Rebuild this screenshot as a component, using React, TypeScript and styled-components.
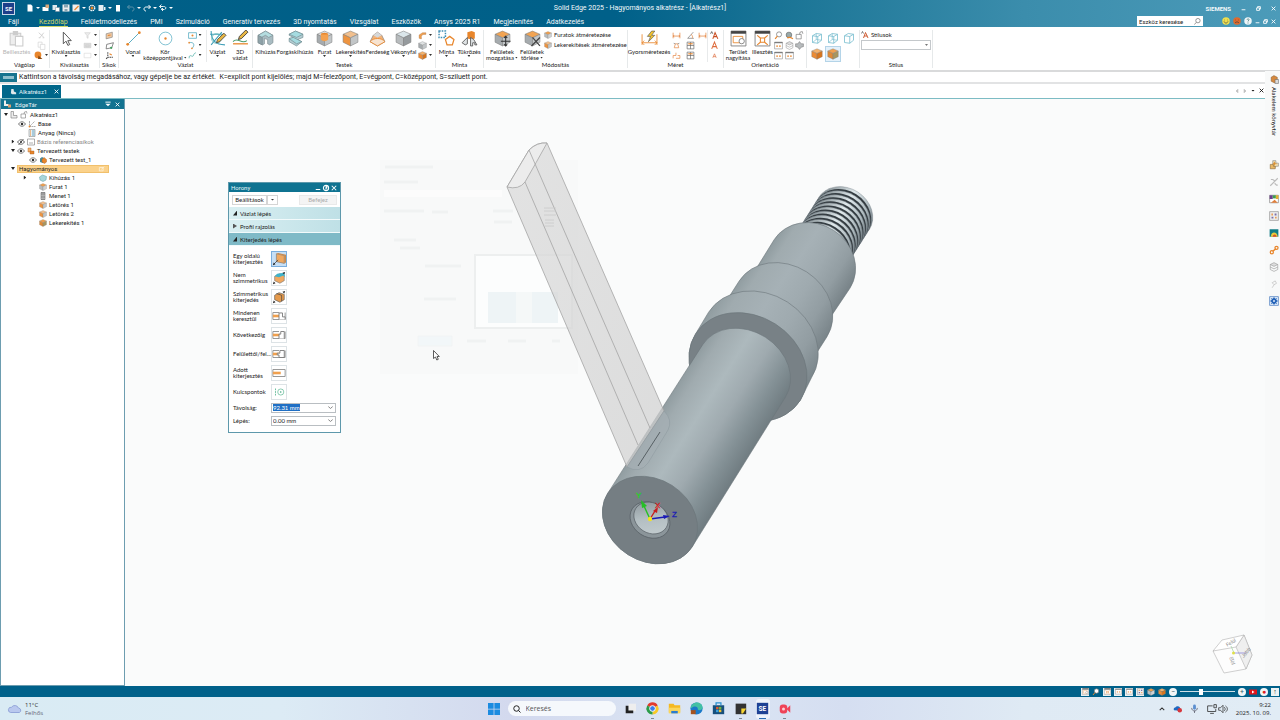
import React from "react";
import styled, { createGlobalStyle } from "styled-components";

const orange = "#e8862c";
const ui = `Roboto, "Liberation Sans", Arial, sans-serif`;
const narrow = `Lato, "Liberation Sans", sans-serif`;
const humanist = `"Open Sans", "Noto Sans", sans-serif`;

const Global = createGlobalStyle`
  *, *::before, *::after { box-sizing: border-box; }
  body { margin: 0; background: #fafbfb; font-family: ${ui}; font-size: 7px; line-height: 9px; color: #222; }
  button, input, select { font: inherit; color: inherit; margin: 0; }
  button { background: none; border: 0; padding: 0; cursor: default; }
  ul { list-style: none; margin: 0; padding: 0; }
`;

/* ---------- icons ---------- */

const Svg = styled.svg<{ $s: number }>`
  width: ${(p) => p.$s}px;
  height: ${(p) => p.$s}px;
  flex: none;
  display: block;
  fill: none;
  overflow: visible;
`;

const Cube = ({ t = "#dfe2e3", l = "#a6abae", r = "#c2c6c8" }: { t?: string; l?: string; r?: string }) => (
  <g stroke="#7d7d7d" strokeWidth=".5" strokeLinejoin="round">
    <path d="M8 1l7 3-7 3.4L1 4z" fill={t} />
    <path d="M1 4l7 3.4V15l-7-3.5z" fill={l} />
    <path d="M15 4L8 7.4V15l7-3.5z" fill={r} />
  </g>
);

const Wire = ({ hidden }: { hidden?: boolean }) => (
  <g stroke="#6db8cb" strokeWidth="1" strokeLinejoin="round">
    <path d="M2 5l5-3 7 1v8l-5 4-7-1z M2 5l7 1v9M9 6l5-3" />
    {hidden && <path d="M7 2v8l7 1M7 10l-5 4" strokeWidth=".8" />}
  </g>
);

const Through = ({ d }: { d: string }) => (
  <>
    <path d="M15 4v8H1V4h7" stroke="#8a8a8a" strokeWidth="1" />
    <path d="M1 8h8" stroke="#f0a04e" strokeWidth="3" />
    <path d={d} stroke="#777" strokeWidth="1" fill="#fff" />
  </>
);

const glyphs: Record<string, React.ReactNode> = {
  paste: <g stroke="#ccc"><path d="M2 3h10v11H2z" fill="#eee" /><path d="M5 1.500h4v3H5z" fill="#ccc" /><path d="M7 6h7v9H7z" fill="#fff" /></g>,
  cut: <path d="M3 3l9 8M12 3l-7 9M3 12h3M10 12h3" stroke="#ccc" strokeWidth="1.5" />,
  copy: <g stroke="#ccc" fill="#fff"><path d="M2 2h7v9H2z" /><path d="M6 6h8v9H6z" /></g>,
  brush: <><circle cx="7" cy="7" r="6" fill={orange} /><path d="M8 8l7 6H7z" fill="#8a4a12" /></>,
  pointer: <path d="M5 2v11l2.500-2.500 1.800 4 1.700-.8-1.800-3.700h3.300z" fill="#fff" stroke="#555" strokeWidth=".9" />,
  filter: <path d="M3 3h10l-4 5v5l-2-1V8z" stroke="#ccc" fill="#eee" />,
  chip: <path d="M2 4h12v8H2z M5 7h6v3H5z" stroke="#ccc" fill="#ddd" />,
  frame: <path d="M2 4h12v8H2z" stroke="#d5d5d5" />,
  plane: <><path d="M2 5l11-3v9L2 14z" fill="#ecc9a6" stroke="#777" /><path d="M5 8l5-1" stroke={orange} strokeWidth="2" /></>,
  plane2: <><path d="M3 6l12-3-3 9-10 2z" stroke="#555" strokeWidth="1.200" /><circle cx="11" cy="12" r="2" fill="#3e9d5b" /></>,
  coords: <><path d="M5 2v9h9M2 14l3-3" stroke="#444" strokeWidth="1.800" strokeDasharray="3 1" /><path d="M8 5l4 2" stroke={orange} strokeWidth="2" /></>,
  line: <><path d="M3 13L13 3" stroke="#3f9fb8" strokeWidth=".8" /><circle cx="2.500" cy="13.500" r="1.300" fill={orange} /><circle cx="13.500" cy="2.500" r="1.300" fill={orange} /></>,
  circle: <><circle cx="8" cy="8" r="6" stroke="#6db8cb" strokeWidth=".8" /><circle cx="8" cy="8" r="1.100" fill={orange} /></>,
  rect: <><path d="M1 3h14v10H1z" stroke="#3f9fb8" strokeWidth="1.200" /><circle cx="8" cy="8" r="1.800" fill={orange} /></>,
  arc: <><path d="M2 3c9-2 11 5 5 10" stroke="#3f9fb8" strokeWidth="1.200" /><circle cx="2" cy="3" r="1.500" fill={orange} /><circle cx="7" cy="13" r="1.500" fill={orange} /></>,
  spline: <path d="M2 13c0-9 5-2 7-4s0-4 5-6" stroke="#3fa9a0" strokeWidth="1.200" />,
  sketch: <><path d="M2 1c0 9 4 13 13 13M1 4h13M2 14L12 2" stroke="#3f9fb8" strokeWidth="1" /><circle cx="7" cy="8" r="4.500" stroke="#66b8b8" strokeWidth=".8" /><path d="M7 12l1-3 6-6 2 2-6 6z" fill="#e9b744" stroke="#444" strokeWidth=".8" /></>,
  sketch3: <><path d="M1 11c4-5 8 3 13-1" stroke="#4b9c6c" /><path d="M1 13h14" stroke={orange} strokeWidth="1.200" /><path d="M6 9l1-3 6-6 2 2-6 6z" fill="#e9b744" stroke="#333" strokeWidth=".8" /></>,
  extrude: <g stroke="#7b8a8f" strokeWidth=".6"><path d="M1 5l7-4 7 4v7l-3 2-2-1V9L7 8v5l-2 1-4-2z" fill="#a9bcc2" /><path d="M1 5l7-4 7 4-4 2-3-2-4 2z" fill="#b5dde0" /><path d="M1 5l4 2v7l-4-2z" fill="#8fa3a9" /></g>,
  revolve: <g stroke="#6f8a90" strokeWidth=".6"><path d="M2 4l6-3 7 3v3l-5 2 4 2-5 4-7-4V8l4-1-4-2z" fill="#b3ccd2" /><path d="M2 4l6-3 7 3-6 3zM2 8l4-1 8 4-5 2z" fill="#a5dbe0" /></g>,
  hole: <><Cube /><ellipse cx="8" cy="4.300" rx="3.500" ry="1.800" fill={orange} /><path d="M4.500 4.300h7V9c-2 2-5 2-7 0z" fill="#f4a14e" /></>,
  round: <Cube l="#ee9440" t="#f1c08f" />,
  draft: <><path d="M4 5l4-3 4 3 3 6-7 4-7-4z" fill="#f2b37a" stroke="#7d7d7d" strokeWidth=".6" /><path d="M4 5l4-3 4 3-4 2z" fill="#d5d8da" /><path d="M1 11c3-4 11-4 14 0l-7 4z" fill="#f7e3d0" stroke={orange} strokeWidth=".8" /></>,
  shell: <Cube t="#dbe6ea" l="#b7bbbd" r="#959a9d" />,
  cube: <Cube />,
  cubeO: <Cube t="#f6b26b" l="#ec8b33" r="#d8751c" />,
  cubeT: <Cube t="#f0a04e" l="#b8bcbe" r="#cfd2d4" />,
  cubeHalf: <Cube t="#f0a04e" l="#e08a36" r="#a8965f" />,
  rib: <path d="M2 13V7l6-4h6v3H9l-3 3v5z" fill="#f0a04e" stroke="#a3673a" strokeWidth=".6" />,
  pattern: <><path d="M1 1h6v6H1z" stroke="#3f8fb5" strokeDasharray="1.500 1" strokeWidth="1.400" /><path d="M11 6l4 3-1.500 5h-5L7 9z" stroke={orange} strokeWidth="1.200" /></>,
  mirror: <><path d="M6 2l4-1 3 1v6l-3 1-4-1z" fill={orange} /><path d="M1 12l5-5v6l-2 1zM9 15V7l3 2 3 5h-2v-2h-2v3z" fill="#dfe3e5" stroke="#555" strokeWidth=".8" /></>,
  move: <><Cube t="#f2a453" /><path d="M11 6v9M6.500 10.500h9M9.500 7.500L11 6l1.500 1.500M9.500 13.500L11 15l1.500-1.500" stroke="#333" strokeWidth="1" /></>,
  del: <><Cube t="#f2a453" /><path d="M8 7l7 8M15 7l-8 8" stroke="#444" strokeWidth="1.200" /></>,
  smart: <><path d="M1 4v10M15 4v10M1 12h14M3 10l-2 2 2 2M13 10l2 2-2 2" stroke={orange} strokeWidth=".8" /><path d="M10 1L6 6h3l-2 5 6-6h-3l3-4z" fill="#f4c430" stroke="#555" strokeWidth=".6" /></>,
  dim: <path d="M2 3v10M14 3v10M2 9h12M4 7L2 9l2 2M12 7l2 2-2 2" stroke="#e58b4a" strokeWidth="1.400" />,
  ang: <><path d="M13 2L3 13h11" stroke="#777" strokeWidth="1.200" /><path d="M9 6c3 2 3 4 2 7" stroke="#e58b4a" strokeWidth="1.300" /></>,
  dims: <path d="M2 13V8h5V3M7 13h7V8M10 8h4" stroke="#e58b4a" strokeWidth="1.300" />,
  loop: <><path d="M4 12h8L10 5H6z" stroke="#e58b4a" strokeWidth="1.300" /><path d="M3 4l3 1M13 4l-3 1" stroke="#777" strokeWidth="1.200" /></>,
  grid: <><path d="M2 2h12v12H2zM2 8h12M8 2v12" stroke="#666" strokeWidth="1.200" /><path d="M4 5h8" stroke={orange} strokeWidth="2" /></>,
  letter: <path d="M3 14L8 2l5 12M5 10h6" stroke="#dd6b3c" strokeWidth="1.800" />,
  letterS: <path d="M5 12l3-7 3 7M6 10h4" stroke="#dd6b3c" strokeWidth="1.200" />,
  zoomArea: <><path d="M1 1h14v14H1z" fill="#fff" stroke="#777" strokeWidth=".8" /><path d="M1 1h14v2.500H1z" fill="#444" /><path d="M3 6h9v6H3z" stroke={orange} strokeWidth=".8" /><circle cx="11" cy="10.500" r="2.500" fill="#fff" stroke="#777" strokeWidth=".8" /></>,
  fit: <><path d="M1 1h14v14H1z" fill="#fff" stroke="#777" strokeWidth=".8" /><path d="M1 1h14v2.500H1z" fill="#444" /><path d="M6 7.500h4v4H6zM3 5l3 2.500M13 5l-3 2.500M3 14l3-2.500M13 14l-3-2.500" stroke={orange} /></>,
  zoom: <><circle cx="9" cy="6" r="4.500" fill="#fff" stroke="#777" strokeWidth="1.300" /><path d="M6 9l-4 5" stroke={orange} strokeWidth="2" /></>,
  win: <><path d="M1 2h14v12H1z" fill="#fff" stroke="#888" /><path d="M1 3h14" stroke="#555" strokeWidth="1.500" /><path d="M4 9h8" stroke={orange} strokeWidth="2" strokeDasharray="3 2" /></>,
  spin: <><circle cx="7" cy="7" r="5" fill="#9aa" stroke="#555" /><path d="M4 12c3-1 6-2 10 2" stroke={orange} strokeWidth="2.500" /></>,
  pan: <path d="M8 1l3 4h4v5l-4 1-3 4-3-4-4-1V5h4z" fill="#b7bbbd" stroke="#666" strokeWidth=".8" />,
  wire: <Wire hidden />,
  wire2: <Wire />,
  style: <><path d="M1 5l2-4 2 4" stroke="#333" strokeWidth="1.200" /><path d="M5 14l4-11 5 11M6.500 10h6" stroke="#c94e22" strokeWidth="1.800" /></>,
  eye: <><path d="M1 8c4-6 10-6 14 0-4 6-10 6-14 0z" stroke="#333" strokeWidth="1.200" /><circle cx="8" cy="8" r="2.500" fill="#333" /></>,
  eyeOff: <><path d="M1 8c4-6 10-6 14 0-4 6-10 6-14 0zM3 14L13 2" stroke="#333" strokeWidth="1.400" /><circle cx="8" cy="8" r="2" fill="#333" /></>,
  part: <path d="M2 1h5v8h7v5H2z" fill="#eee" stroke="#777" strokeWidth="1.200" />,
  lock: <path d="M2 6h9v8H2zM8 6l1-4 4-1 1 4" fill="#fff" stroke="#777" strokeWidth="1.200" />,
  axes: <><path d="M3 2v11h12M3 13L13 3" stroke="#777" strokeWidth="1.200" strokeDasharray="4 1" /><circle cx="3" cy="13" r="1.800" fill={orange} /></>,
  material: <><path d="M2 1h12v14H2z" fill="#e8f0f2" stroke="#777" /><path d="M4 4h2M4 8h2M4 12h2" stroke={orange} strokeWidth="2" /><path d="M8 4h5M8 8h5M8 12h5" stroke="#3f8fb5" strokeWidth="1.500" /></>,
  refs: <path d="M1 2h14v12H1zM4 10h8" fill="#fff" stroke="#777" strokeWidth="1.200" />,
  bodies: <><path d="M2 2h6v8H2z" fill="#f6b26b" stroke="#a3571a" strokeWidth=".8" /><path d="M6 8h8v6H6z" fill={orange} stroke="#a3571a" strokeWidth=".8" /></>,
  body: <><path d="M2 5l4-3 4 2v9l-3 1-5-2z" fill="#4c8a99" /><path d="M6 7l4-4 5 4v5l-4 3-5-3z" fill={orange} stroke="#a3571a" strokeWidth=".8" /></>,
  ext: <path d="M1 6l6-4 8 3-1 7-6 3-6-3z" fill="#a8d6da" stroke="#5f9aa1" />,
  thread: <><path d="M4 1h8v14H4z" fill="#888" stroke="#555" /><path d="M4 4h8M4 7h8M4 10h8M4 13h8" stroke="#ddd" /></>,
  sideOne: <><path d="M5 2l9 2v9l-9-2z" fill="#f0a860" stroke="#777" strokeWidth=".7" /><path d="M5 2l2-1 9 2-2 1zM14 4l2-1v9l-2 1z" fill="#c98a4d" /><path d="M2 14l5-5" stroke="#333" strokeWidth=".8" /><path d="M1 15l1-3 2 2z" fill="#222" /></>,
  sideTwo: <><path d="M3 6l6-3 5 2v6l-5 3-6-3z" fill="#f0a860" stroke="#777" strokeWidth=".7" /><path d="M3 6l3-3 8-1 1 5-2-2-5 2z" fill="#3fb2c9" /><path d="M1 15l1-3 2 2zM15 1l-1 3-2-2z" fill="#222" /></>,
  sideSym: <><path d="M3 6l5-3 6 2v6l-5 3-6-3z" fill="#e59a4c" stroke="#555" strokeWidth=".7" /><path d="M5 4l6 2v7" stroke="#444" strokeWidth=".8" /><path d="M1 15l1-3 2 2zM15 1l-1 3-2-2z" fill="#222" /></>,
  thru1: <Through d="M8 12V4.500h4V9h3v3" />,
  thru2: <Through d="M8 12V7h2V4h4v8" />,
  thru3: <Through d="M8 12V9H6V7h3V4h5v8z" />,
  thru4: <><path d="M1 4h14v8H1z" stroke="#8a8a8a" fill="#fff" /><path d="M1 8h9" stroke="#f0a04e" strokeWidth="3" /></>,
  keypt: <><circle cx="10" cy="8" r="3.500" stroke="#5bb894" strokeWidth=".8" /><circle cx="10" cy="8" r=".9" fill="#3ba27c" /><path d="M4 4v8" stroke="#5bb894" strokeDasharray="2 1" /></>,
  doc: <path d="M3 1h7l3 3v11H3z" fill="#fff" />,
  docPart: <path d="M3 2h5l1 6 5 2v4H5l-3-2z" fill="#dfe8eb" />,
  open: <><path d="M1 6h12v8H1z" fill="#fff" /><path d="M7 1h7v7H7z" fill="#dba77a" /></>,
  sheet: <><path d="M1 2h9v10H1z" fill="#dfe9ee" /><path d="M7 7h8v8H7z" fill="#fff" stroke="#789" /></>,
  save: <><path d="M1 1h14v14H1z" fill="#eee" /><path d="M4 2h8v5H4zM5 10h6v5H5z" fill="#8aa6b3" /></>,
  saveAs: <><path d="M1 1h14v14H1z" fill="#eee" /><path d="M5 12L13 4" stroke={orange} strokeWidth="2.500" /></>,
  gear: <><circle cx="8" cy="8" r="5.500" stroke="#fff" strokeWidth="2.500" strokeDasharray="3 1.300" /><circle cx="8" cy="8" r="3" fill={orange} /></>,
  print: <path d="M1 2h10v12H1zM12 6h3v6h-3z" fill="#fff" opacity=".9" />,
  phone: <path d="M4 2h8v13H4z" fill="#fff" />,
  undo: <path d="M5 2L1 6l4 4M1 6h8c7 0 6 8 1 8" stroke="#5f93a9" strokeWidth="2" />,
  redo: <path d="M11 2l4 4-4 4M15 6H7c-7 0-6 8-1 8" stroke="#fff" strokeWidth="2" />,
  orbit: <path d="M5 1L1 5l4 4M1 5h8c6 0 6 5 2 6M8 8l-3 3 3 3M5 11h5" stroke="#fff" strokeWidth="1.800" />,
  link: <><circle cx="4.500" cy="11.500" r="2.500" stroke={orange} strokeWidth="2" /><circle cx="12" cy="4.500" r="2.500" stroke={orange} strokeWidth="2" /><path d="M6 10l5-4" stroke={orange} strokeWidth="2.500" /></>,
  percent: <path d="M2 14L14 2M3 4h3l3 2M9 10l3 3h2" stroke="#bbb" strokeWidth="1.800" />,
  palette: <><path d="M1 2h14v12H1z" fill="#fff" stroke="#777" /><path d="M1 2h5v6H1z" fill="#6b3f8e" /><path d="M6 2h5v5H6z" fill="#3c9c52" /><path d="M11 2h4v6h-4z" fill="#e0b030" /><path d="M3 14l6-5 5 5z" fill="#e17f3a" /></>,
  swatches: <><path d="M1 1h14v14H1z" fill="#eee" stroke="#888" /><path d="M4 4h2v3H4zM10 9h2v3h-2z" fill={orange} /><path d="M9 4h3v3H9zM4 9h3v3H4z" fill="#7c6fa8" /></>,
  rainbow: <><path d="M1 2h14v12H1z" fill="#127c86" /><path d="M3 14c0-9 10-9 11 0z" fill="#e9c93c" /><path d="M6 14c0-5 6-5 6 0z" fill="#d9532c" /></>,
  layers: <g stroke="#999" strokeWidth="1"><path d="M8 1l6 3-6 3-6-3z" fill="#ddd" /><path d="M2 8l6 3 6-3M2 12l6 3 6-3M2 4v8M14 4v8" /></g>,
  pin: <path d="M5 14l4-6M5 6l5-3 2 4-4 2z" stroke="#ccc" strokeWidth="1.500" />,
  blue: <><path d="M1 1h14v14H1z" fill="#e7f0fb" stroke="#2f67b5" /><path d="M8 1.500l2 3 3-1.500-1.500 3 3 2-3 2 1.500 3-3-1.500-2 3-2-3L3 13l1.500-3-3-2 3-2L3 3l3 1.500z" fill="#2463b8" /><circle cx="8" cy="8" r="1.500" fill="#e7f0fb" /></>,
  library: <><path d="M2 4l5-3 6 3v7l-5 3-6-3z" fill="#d5893f" stroke="#7b5a35" strokeWidth=".8" /><path d="M9 8h6v7H9z" fill="#ddd" stroke="#666" /></>,
  plus: <><path d="M6 1h5v4h4v5h-4v1H6z" fill="#f3e0b0" stroke="#888" /><path d="M2 7h5v3h3v4H2z" fill="#e9b765" stroke="#8a6a3a" /><path d="M8.500 3v6M6 6h6" stroke="#d98a2a" strokeWidth="1.500" /></>,
};

const Icon = ({ n, s = 9 }: { n: string; s?: number }) => (
  <Svg $s={s} viewBox="0 0 16 16" aria-hidden="true">{glyphs[n]}</Svg>
);

/* ---------- page frame ---------- */

const Page = styled.div`
  min-height: 100vh;
  display: flex;
  flex-direction: column;
  overflow: hidden;
`;

const Header = styled.header`
  flex: none;
  background: linear-gradient(90deg, #005f87 0%, #006089 48%, #1c7697 62%, #3b8dac 80%, #4c9bb9 100%);
  color: #f2f8fa;
`;

const TitleRow = styled.div`
  height: 15px;
  display: grid;
  grid-template-columns: 1fr auto 1fr;
  align-items: center;
  padding-top: 1px;
`;

const QuickBar = styled.div`
  display: flex;
  align-items: center;
  gap: 2px;
  padding-left: 2px;
`;

const Logo = styled.div`
  width: 13px;
  height: 13px;
  margin-right: 9px;
  border: 1px solid #c8d8e8;
  background: #1d3f8a;
  font-size: 6px;
  font-weight: bold;
  line-height: 12px;
  text-align: center;
`;

const Caret = styled.span<{ $c?: string; $wide?: boolean }>`
  flex: none;
  width: ${(p) => (p.$wide ? 4 : 3)}px;
  height: 2px;
  background: ${(p) => p.$c || "#333"};
  clip-path: polygon(0 0, 100% 0, 50% 100%);
`;

const WindowButtons = styled.div<{ $gap: number }>`
  display: flex;
  justify-content: flex-end;
  align-items: center;
  gap: ${(p) => p.$gap}px;
  padding-right: 4px;
`;

const Brand = styled.strong`
  font-size: 6px;
`;

const TabRow = styled.div`
  height: 12px;
  display: flex;
  align-items: center;
`;

const Tabs = styled.nav`
  display: flex;
  gap: 13px;
  padding-left: 8px;
  flex: 1;
`;

const RibbonTab = styled.a<{ $on?: boolean; $file?: boolean }>`
  color: ${(p) => (p.$on ? "#cfd66a" : "#f2f8fa")};
  text-decoration: none;
  white-space: nowrap;
  height: 11px;
  line-height: 12px;
  margin-right: ${(p) => (p.$file ? "7px" : "0")};
  box-shadow: ${(p) => (p.$on ? "0 -1px 0 #cfd66a inset" : "none")};
`;

const SearchBox = styled.label`
  display: flex;
  align-items: center;
  width: 66px;
  height: 10px;
  margin-right: 19px;
  padding: 0 2px;
  background: #fff;
  color: #222;
  input {
    flex: 1;
    min-width: 0;
    padding: 0;
    border: 0;
    outline: 0;
    background: none;
    font-size: 6px;
  }
  input::placeholder { color: #222; opacity: 1; }
`;

/* ---------- ribbon ---------- */

const Ribbon = styled.div`
  flex: none;
  height: 43px;
  display: flex;
  padding-top: 3px;
  background: #fff;
  font-family: ${narrow};
  font-size: 6px;
  line-height: 6px;
`;

const Group = styled.section<{ $w: number }>`
  flex: none;
  width: ${(p) => p.$w}px;
  height: 38px;
  display: flex;
  flex-direction: column;
  justify-content: space-between;
  border-right: 1px solid #e6e9ea;
`;

const GroupRow = styled.div`
  display: flex;
  height: 32px;
`;

const GroupName = styled.h2`
  margin: 0;
  font: inherit;
  text-align: center;
  white-space: nowrap;
`;

const Tool = styled.button<{ $w: number; $dim?: boolean }>`
  flex: none;
  width: ${(p) => p.$w}px;
  display: flex;
  flex-direction: column;
  align-items: center;
  gap: 1px;
  white-space: nowrap;
  color: ${(p) => (p.$dim ? "#b5b5b5" : "#222")};
`;

const ToolText = styled.span`
  display: flex;
  flex-direction: column;
  align-items: center;
  gap: 1px;
  height: 14px;
  line-height: 5px;
  padding-top: 1px;
`;

const Inline = styled.span`
  display: flex;
  align-items: center;
  gap: 1px;
`;

const Stack = styled.div<{ $w: number; $line?: boolean }>`
  flex: none;
  width: ${(p) => p.$w}px;
  display: flex;
  flex-direction: column;
  align-items: center;
  border-right: ${(p) => (p.$line ? "1px solid #e8eaeb" : "0")};
`;

const Mini = styled.button`
  display: flex;
  align-items: center;
  gap: 2px;
  height: 10px;
  white-space: nowrap;
`;

const StyleGrid = styled.div`
  display: grid;
  grid-template-columns: repeat(3, 16px);
  grid-auto-rows: 16px;
  padding: 0 2px;
`;

const StyleButton = styled.button<{ $on?: boolean }>`
  display: grid;
  place-items: center;
  background: ${(p) => (p.$on ? "#e4f1fa" : "none")};
  box-shadow: ${(p) => (p.$on ? "0 0 0 1px #b4d4e8 inset" : "none")};
`;

const StyleField = styled.span`
  display: flex;
  align-items: center;
  width: 70px;
  height: 10px;
  padding-right: 2px;
  border: 1px solid #c4c8cb;
  background: #fff;
  select {
    flex: 1;
    height: 8px;
    appearance: none;
    border: 0;
    padding: 0;
    background: none;
  }
`;

const StyleList = styled.div`
  padding: 0 1px;
`;

type ToolDef = { i: string; t: string; b?: string; w: number; caret?: boolean; dim?: boolean };

const BigTool = ({ i, t, b, w, caret, dim }: ToolDef) => (
  <Tool $w={w} $dim={dim}>
    <Icon n={i} s={17} />
    <ToolText>
      <span>{t}</span>
      {b ? <Inline>{b}{caret && <Caret />}</Inline> : caret && <Caret />}
    </ToolText>
  </Tool>
);

const MiniStack = ({ w, items, caret, line }: { w: number; items: string[]; caret?: boolean; line?: boolean }) => (
  <Stack $w={w} $line={line}>
    {items.map((n, k) => (
      <Mini key={k} aria-label={n}><Icon n={n} s={9} />{caret && <Caret />}</Mini>
    ))}
  </Stack>
);

/* ---------- work area ---------- */

const Body = styled.div`
  flex: 1;
  display: flex;
  min-height: 0;
`;

const Main = styled.main`
  flex: 1;
  min-width: 0;
  display: flex;
  flex-direction: column;
`;

const Prompt = styled.div`
  height: 14px;
  display: flex;
  align-items: center;
  gap: 2px;
  border-top: 2px solid #d9dadb;
  border-bottom: 2px solid #e2e3e4;
  background: #fff;
  white-space: pre;
`;

const PromptMark = styled.span`
  width: 17px;
  height: 9px;
  padding: 3px;
  background: #17748f;
  &::before {
    content: "";
    display: block;
    height: 3px;
    background: #8fc0cd;
  }
`;

const DocBar = styled.div`
  height: 15px;
  display: flex;
  align-items: flex-end;
  justify-content: space-between;
  border-bottom: 1px solid #7dbcc4;
  background: #fff;
`;

const DocTab = styled.div`
  height: 13px;
  width: 59px;
  margin-left: 2px;
  padding: 0 2px 0 8px;
  display: flex;
  align-items: center;
  gap: 2px;
  background: #00678a;
  color: #e4f2f6;
  font-size: 6px;
  button { margin-left: auto; }
`;

const DocNav = styled.div`
  display: flex;
  align-items: center;
  gap: 4px;
  padding: 0 1px 5px 0;
`;

const Split = styled.div`
  flex: 1;
  display: flex;
  min-height: 0;
`;

const TreePanel = styled.aside`
  flex: none;
  width: 125px;
  border: 1px solid #6d9db0;
  border-top: 0;
  background: #fff;
`;

const PanelTitle = styled.div`
  height: 10px;
  display: flex;
  align-items: center;
  gap: 4px;
  padding: 0 4px 0 2px;
  background: #127391;
  color: #e4f2f6;
  font-size: 6px;
  h2 { margin: 0; flex: 1; font: inherit; }
`;

const Tree = styled.ul`
  padding-top: 1px;
  font-size: 6px;
  line-height: 9px;
`;

const TreeRow = styled.li<{ $pad: number; $dim?: boolean }>`
  height: 9px;
  display: flex;
  align-items: center;
  gap: 2px;
  padding-left: ${(p) => p.$pad}px;
  color: ${(p) => (p.$dim ? "#888" : "#222")};
  white-space: nowrap;
`;

const TreeMark = styled.span<{ $open?: boolean }>`
  flex: none;
  width: 4px;
  height: 4px;
  background: #222;
  clip-path: ${(p) => (p.$open ? "polygon(0 10%, 100% 10%, 50% 90%)" : "polygon(20% 0, 80% 50%, 20% 100%)")};
`;

const TreeBand = styled.span`
  display: flex;
  justify-content: space-between;
  align-items: center;
  width: 92px;
  height: 8px;
  padding: 0 3px 0 1px;
  background: #fbd28b;
  border: 1px solid #f1c06c;
`;

const Canvas = styled.div`
  position: relative;
  flex: 1;
  min-width: 0;
  background: #fafbfb;
`;

const Scene = styled.svg`
  position: absolute;
  inset: 0;
  width: 100%;
  height: 100%;
`;

const Rail = styled.aside`
  flex: none;
  width: 15px;
  display: flex;
  flex-direction: column;
  align-items: center;
  gap: 7px;
  padding: 4px 0 0 3px;
  border-top: 1px solid #d9dadb;
  background: #f8f9f9;
`;

const RailTab = styled.div`
  height: 78px;
  display: flex;
  flex-direction: column;
  align-items: center;
  gap: 3px;
  font-size: 6px;
  span {
    writing-mode: vertical-rl;
    white-space: nowrap;
  }
`;

/* ---------- floating command window ---------- */

const Dialog = styled.section`
  position: absolute;
  left: 103px;
  top: 83px;
  width: 113px;
  height: 251px;
  border: 1px solid #5d98ab;
  background: #fff;
  font-family: ${narrow};
  font-size: 6px;
  line-height: 7px;
`;

const DialogTitle = styled.div`
  height: 9px;
  display: flex;
  align-items: center;
  gap: 2px;
  padding: 0 3px 0 2px;
  background: #0f7391;
  color: #eaf6f8;
  font-family: ${ui};
  h2 { margin: 0; flex: 1; font: inherit; }
`;

const DialogActions = styled.div`
  height: 15px;
  display: flex;
  align-items: center;
  padding: 0 3px;
`;

const PushButton = styled.button<{ $w: number; $dim?: boolean; $end?: boolean }>`
  width: ${(p) => p.$w}px;
  height: 10px;
  display: grid;
  place-items: center;
  margin-left: ${(p) => (p.$end ? "auto" : "0")};
  border: 1px solid ${(p) => (p.$dim ? "#e9e9e9" : "#d5d5d5")};
  background: ${(p) => (p.$dim ? "#f4f4f4" : "#fff")};
  color: ${(p) => (p.$dim ? "#aaa" : "#222")};
`;

const StepHead = styled.button<{ $on?: boolean }>`
  width: 100%;
  height: 13px;
  display: flex;
  align-items: center;
  gap: 3px;
  padding: 0 4px;
  border-bottom: 1px solid #f2fafb;
  background: ${(p) => (p.$on ? "#7fbac7" : "linear-gradient(90deg, #d9eff2, #bfe0e6)")};
`;

const StepMark = styled.i<{ $open?: boolean }>`
  width: 4px;
  height: 5px;
  background: ${(p) => (p.$open ? "#222" : "#555")};
  clip-path: ${(p) => (p.$open ? "polygon(100% 0, 100% 100%, 0 100%)" : "polygon(0 0, 100% 50%, 0 100%)")};
`;

const Options = styled.div`
  padding: 3px 4px 0;
`;

const OptionRow = styled.label`
  height: 19px;
  display: grid;
  grid-template-columns: 38px 16px;
  align-items: center;
  white-space: pre-line;
  line-height: 6px;
`;

const OptionButton = styled.button<{ $on?: boolean }>`
  width: 16px;
  height: 16px;
  display: grid;
  place-items: center;
  border: 1px solid ${(p) => (p.$on ? "#7aaede" : "#dde3e6")};
  background: ${(p) => (p.$on ? "#c7dff5" : "#fff")};
`;

const FieldRow = styled.label`
  height: 13px;
  display: grid;
  grid-template-columns: 38px 65px;
  align-items: center;
`;

const Combo = styled.span<{ $sel?: boolean }>`
  height: 10px;
  display: flex;
  align-items: center;
  justify-content: space-between;
  padding: 0 2px 0 1px;
  border: 1px solid #b9bec2;
  input {
    width: 27px;
    height: 7px;
    padding: 0;
    border: 0;
    outline: 0;
    line-height: 7px;
    background: ${(p) => (p.$sel ? "#1f6fc4" : "none")};
    color: ${(p) => (p.$sel ? "#fff" : "#222")};
  }
`;

/* ---------- bottom bars ---------- */

const StatusBar = styled.div`
  flex: none;
  height: 11px;
  display: flex;
  align-items: center;
  justify-content: flex-end;
  gap: 3px;
  padding-right: 1px;
  background: #00618a;
`;

const StatusChip = styled.button`
  width: 8px;
  height: 8px;
  display: grid;
  place-items: center;
  background: #edf2f3;
`;

const StatusPlain = styled(StatusChip)`
  background: none;
`;

const ZoomSlider = styled.input`
  appearance: none;
  width: 55px;
  height: 8px;
  margin: 0;
  background: linear-gradient(#cfe0e7, #cfe0e7) center / 100% 1px no-repeat;
  &::-webkit-slider-thumb {
    appearance: none;
    width: 4px;
    height: 6px;
    background: #fff;
  }
`;

const RoundButton = styled.button<{ $red?: boolean }>`
  width: 8px;
  height: 8px;
  border-radius: 50%;
  display: grid;
  place-items: center;
  background: #f2f6f7;
  color: ${(p) => (p.$red ? "#d22" : "#35606f")};
  line-height: 6px;
`;

const TaskBar = styled.footer`
  flex: none;
  height: 23px;
  display: grid;
  grid-template-columns: 1fr auto 1fr;
  align-items: center;
  padding: 0 9px 0 8px;
  background: linear-gradient(90deg, #d9ebf4 0, #dcebf5 22%, #d3d9ee 40%, #dbe6f4 55%, #d5def1 66%, #dfeaf4 80%, #e1ecf5 100%);
  font-family: ${humanist};
`;

const Weather = styled.div`
  display: flex;
  align-items: center;
  gap: 3px;
  font-size: 6px;
  line-height: 8px;
  color: #333;
  small { display: block; font-size: 6px; color: #667; }
`;

const Dock = styled.div`
  display: flex;
  align-items: center;
  gap: 8px;
`;

const DockSearch = styled.label`
  width: 108px;
  height: 15px;
  display: flex;
  align-items: center;
  gap: 5px;
  padding: 0 5px;
  border-radius: 8px;
  background: #f5f8fc;
  input {
    width: 60px;
    padding: 0;
    border: 0;
    outline: 0;
    background: none;
  }
  input::placeholder { color: #555; opacity: 1; }
`;

const DockApp = styled.button<{ $run?: boolean; $on?: boolean }>`
  width: 14px;
  height: 20px;
  display: grid;
  place-items: center;
  border-radius: 3px;
  position: relative;
  background: ${(p) => (p.$on ? "#eef3fb" : "none")};
  &::after {
    content: "";
    position: absolute;
    bottom: 0;
    width: ${(p) => (p.$on ? 7 : 3)}px;
    height: 1px;
    background: ${(p) => (p.$on ? "#2c6bb3" : p.$run ? "#7d8894" : "none")};
  }
`;

const Tray = styled.div`
  display: flex;
  justify-content: flex-end;
  align-items: center;
  gap: 8px;
  text-align: right;
  font-size: 6px;
  line-height: 8px;
`;

const Win = ({ s, c = "#fff", d }: { s: number; c?: string; d: string }) => (
  <Svg $s={s} viewBox="0 0 16 16" aria-hidden="true"><path d={d} stroke={c} strokeWidth="2.800" /></Svg>
);
const CLOSE = "M2 2l12 12M14 2L2 14";
const MIN = "M2 12h12";
const RESTORE = "M2 6h9v8H2zM5 6V2h9v8h-3";
const LENS = "M9 1a5 5 0 1 1 0 10a5 5 0 0 1 0-10M5 10l-4 5";

const quick = ["doc", "^", "open", "sheet", "save", "saveAs", "^", "gear", "print", "^", "phone", "", "undo", "^", "redo", "^", "orbit", "^"];
const tabs = ["Fájl", "Kezdőlap", "Felületmodellezés", "PMI", "Szimuláció", "Generatív tervezés", "3D nyomtatás", "Vizsgálat", "Eszközök", "Ansys 2025 R1", "Megjelenítés", "Adatkezelés"];

/* ---------- model ---------- */

const ANG = 32.5;
const COS = Math.cos((ANG * Math.PI) / 180);
const SIN = Math.sin((ANG * Math.PI) / 180);

type Ring = { x: number; y: number; a: number; b: number };

const Section = ({ id, near, far, deep }: { id: string; near: Ring; far: Ring; deep?: boolean }) => {
  const nl = [near.x - near.a * COS, near.y - near.a * SIN];
  const nr = [near.x + near.a * COS, near.y + near.a * SIN];
  const fl = [far.x - far.a * COS, far.y - far.a * SIN];
  const fr = [far.x + far.a * COS, far.y + far.a * SIN];
  return (
    <g>
      <linearGradient id={id} gradientUnits="userSpaceOnUse" x1={nl[0]} y1={nl[1]} x2={nr[0]} y2={nr[1]}>
        <stop offset="0" stopColor="#919da1" />
        <stop offset=".12" stopColor="#a0abaf" />
        <stop offset=".35" stopColor={deep ? "#adb9bd" : "#a6b1b6"} />
        <stop offset=".58" stopColor="#9faaaf" />
        <stop offset=".8" stopColor={deep ? "#849196" : "#929da2"} />
        <stop offset="1" stopColor={deep ? "#6f7b80" : "#798489"} />
      </linearGradient>
      <path
        d={`M${nl}L${fl}A${far.a} ${far.b} ${ANG} 0 1 ${fr}L${nr}A${near.a} ${near.b} ${ANG} 0 1 ${nl}Z`}
        fill={`url(#${id})`}
        stroke="#6b757a"
        strokeWidth=".6"
      />
    </g>
  );
};

const Disc = ({ r, fill, stroke = "#6b757a", w = 0.6 }: { r: Ring; fill: string; stroke?: string; w?: number }) => (
  <ellipse rx={r.a} ry={r.b} transform={`translate(${r.x} ${r.y}) rotate(${ANG})`} fill={fill} stroke={stroke} strokeWidth={w} />
);

const Thread = () => (
  <g>
    <linearGradient id="threadFill" x1="0" x2="1" y1="0" y2="0">
      <stop offset="0" stopColor="#7f8a8f" />
      <stop offset=".45" stopColor="#dfe8eb" />
      <stop offset=".8" stopColor="#a9b5ba" />
      <stop offset="1" stopColor="#6a757b" />
    </linearGradient>
    {Array.from({ length: 10 }, (_, k) => {
      const x = 844 - k * 2.6;
      const y = 213.5 + k * 4.1;
      return (
        <g key={k}>
          <Disc r={{ x, y, a: 30, b: 25.5 }} fill="url(#threadFill)" stroke="#7a858a" w={0.4} />
          <Disc r={{ x: x - 1.3, y: y + 2.1, a: 29.8, b: 25.2 }} fill="#343c41" stroke="none" />
        </g>
      );
    })}
  </g>
);

const Ghost = () => (
  <g fill="none" opacity=".55">
    <path d="M380 160h198v214H380z" fill="#f6f7f7" opacity=".4" />
    <path d="M384 190h118v7H384z" fill="#fff" opacity=".8" />
    <g stroke="#e3e6e7" strokeWidth="3" opacity=".7">
      <path d="M385 167h48M384 182h34M384 211h40M432 212h16M493 211h20M394 240h22M400 248h20M425 266h36M424 299h32M467 341h19M508 341h18M552 341h8M494 222h18" />
    </g>
    <path d="M475 255h97v73h-97z" fill="#fff" stroke="#e4e6e7" strokeWidth="2" />
    <path d="M488 292h70v31h-70z" fill="#e6f0f3" />
    <path d="M516 292h16v31h-16z" fill="#f1f6f7" />
    <path d="M418 336h34v10h-34z" fill="#edf5f8" stroke="#ebeeef" />
  </g>
);

const Model = () => (
  <Scene viewBox="125 99 1140 587" role="img" aria-label="Alkatrész1">
    <Ghost />
    <Thread />
    <Section id="s4" near={{ x: 783, y: 309, a: 44, b: 37 }} far={{ x: 812, y: 264, a: 45, b: 40 }} />
    <Section id="s3" near={{ x: 760, y: 345, a: 52, b: 46 }} far={{ x: 783, y: 309, a: 52, b: 44 }} />
    <Section id="s2" near={{ x: 748, y: 367, a: 62, b: 51 }} far={{ x: 760, y: 345, a: 61, b: 51 }} />
    <Disc r={{ x: 748, y: 367, a: 62, b: 51 }} fill="#788186" />
    <Section id="s1" near={{ x: 650, y: 520, a: 50, b: 41 }} far={{ x: 744, y: 371, a: 49, b: 40 }} deep />

    <linearGradient id="cutter" x1="0" y1="0" x2="1" y2="1">
      <stop offset="0" stopColor="#d9d9d9" />
      <stop offset="1" stopColor="#cfcfcf" />
    </linearGradient>
    <g stroke="#a5a5a5" strokeWidth=".8">
      <path d="M507 187L529 150Q537 142 547 143L664 411 627 467z" fill="url(#cutter)" fillOpacity=".7" />
      <path d="M507 187L529 150Q537 142 547 143Q536 163 525 182Q519 190 507 187z" fill="#efefef" fillOpacity=".8" />
      <path d="M529 150L650 428M525 182L638 445" stroke="#a5a5a5" fill="none" />
      <path d="M544 208h12M544 211h12M544 215h12M545 220h9M545 223h9M545 226h9" stroke="#c9c9c9" fill="none" />
    </g>
    <path d="M627 467L664 411Q673 420 668 430L648 463Q640 474 627 467z" fill="#a5afb4" fillOpacity=".8" stroke="#8d989e" strokeWidth=".5" />
    <path d="M638 466L660 432" stroke="#444c50" strokeWidth=".8" />

    <Disc r={{ x: 650, y: 520, a: 50, b: 41 }} fill="#757e83" />
    <linearGradient id="bore" x1="0" y1="0" x2="1" y2="1">
      <stop offset="0" stopColor="#848e93" />
      <stop offset=".5" stopColor="#b3bec2" />
      <stop offset="1" stopColor="#c6cfd2" />
    </linearGradient>
    <Disc r={{ x: 650, y: 520, a: 21, b: 17 }} fill="#8b959a" stroke="#50585d" />
    <Disc r={{ x: 651, y: 518, a: 18, b: 15 }} fill="url(#bore)" stroke="#50585d" />

    <g strokeWidth="1.400" fill="none">
      <path d="M650 519l-6-13" stroke="#25c025" />
      <path d="M641 500l6 6-5 2z" fill="#25c025" />
      <path d="M650 519l5-8" stroke="#c81d1d" />
      <path d="M658 507l-1 6-4-2z" fill="#c81d1d" />
      <path d="M650 519l15-2" stroke="#1b1bb5" />
      <path d="M670 516l-6 3-1-4z" fill="#1b1bb5" />
      <circle cx="650" cy="519" r="2.200" fill="#f2e31a" />
    </g>
    <g fontFamily="'Liberation Sans', sans-serif" fontSize="8" strokeWidth=".3">
      <text x="636" y="498" fill="#25d025" stroke="#25d025">Y</text>
      <text x="655" y="508" fill="#d81d1d" stroke="#d81d1d">X</text>
      <text x="672" y="517" fill="#1b1bb5" stroke="#1b1bb5">Z</text>
    </g>

    <path d="M433.500 350.500v8l2-1.500 1.300 3 1.500-.700-1.300-2.800h2.300z" fill="#fff" stroke="#333" strokeWidth=".8" />

    <g stroke="#b0b0b0" strokeWidth=".6" strokeLinejoin="round">
      <path d="M1213 651l31-16 8 20-6 14-22 4z" fill="#fdfdfd" />
      <path d="M1236 647l8-12 8 20-6 14z" fill="#efefef" />
      <path d="M1213 651l9-11 22-5-8 12z" fill="#fff" />
    </g>
    <path d="M1234 653h12" stroke="#8a86d8" strokeWidth=".8" />
    <path d="M1234 653l-3-7" stroke="#a8d8a8" strokeWidth=".8" />
    <circle cx="1233.500" cy="653" r="1.500" fill="#dfe04a" />
    <g fontFamily={ui} fontSize="5" fill="#888">
      <text x="1226" y="658" transform="rotate(70 1228 660)">Elöl</text>
      <text x="1226" y="646" transform="rotate(-30 1228 644)">Felül</text>
      <text x="1240" y="656" transform="rotate(-50 1244 653)">Jobb</text>
    </g>
  </Scene>
);

const treeRows: { pad: number; t: string; icons: string[]; open?: boolean; mark?: boolean; dim?: boolean }[] = [
  { pad: 3, t: "Alkatrész1", icons: ["part", "lock"], mark: true, open: true },
  { pad: 17, t: "Base", icons: ["eye", "axes"] },
  { pad: 27, t: "Anyag (Nincs)", icons: ["material"] },
  { pad: 10, t: "Bázis referenciasíkok", icons: ["eyeOff", "refs"], mark: true, dim: true },
  { pad: 10, t: "Tervezett testek", icons: ["eye", "bodies"], mark: true, open: true },
  { pad: 28, t: "Tervezett test_1", icons: ["eye", "body"] },
];

const featureRows: [string, string][] = [
  ["ext", "Kihúzás 1"],
  ["cubeT", "Furat 1"],
  ["thread", "Menet 1"],
  ["round", "Letörés 1"],
  ["round", "Letörés 2"],
  ["cubeHalf", "Lekerekítés 1"],
];

const options: [string, string][] = [
  ["Egy oldalú\nkiterjesztés", "sideOne"],
  ["Nem\nszimmetrikus", "sideTwo"],
  ["Szimmetrikus\nkiterjedés", "sideSym"],
  ["Mindenen\nkeresztül", "thru1"],
  ["Következőig", "thru2"],
  ["Felülettől/fel...", "thru3"],
  ["Adott\nkiterjesztés", "thru4"],
  ["Kulcspontok", "keypt"],
];

const App = () => (
  <Page>
    <Global />
    <Header>
      <TitleRow>
        <QuickBar>
          <Logo>SE</Logo>
          {quick.map((q, k) => (q === "^" ? <Caret key={k} $c="#fff" $wide /> : <Icon key={k} n={q} s={q ? 8 : 1} />))}
        </QuickBar>
        <span>Solid Edge 2025 - Hagyományos alkatrész - [Alkatrész1]</span>
        <WindowButtons $gap={10}>
          <Brand>SIEMENS</Brand>
          <Win s={5} d={MIN} />
          <Win s={5} d={RESTORE} />
          <Win s={5} d={CLOSE} />
        </WindowButtons>
      </TitleRow>
      <TabRow>
        <Tabs>
          {tabs.map((t, k) => (
            <RibbonTab key={t} href="#" $on={k === 1} $file={k === 0}>{t}</RibbonTab>
          ))}
        </Tabs>
        <SearchBox>
          <input aria-label="Eszköz keresése" placeholder="Eszköz keresése" />
          <Svg $s={7} viewBox="0 0 16 16"><path d={LENS} stroke="#666" strokeWidth="1.500" /></Svg>
        </SearchBox>
        <WindowButtons $gap={3}>
          <Svg $s={8} viewBox="0 0 16 16"><circle cx="8" cy="8" r="7.500" fill="#f0df4e" /><path d="M5 6h1M10 6h1M4 9c2 4 6 4 8 0" stroke="#444" strokeWidth="1.500" /></Svg>
          <Svg $s={8} viewBox="0 0 16 16"><circle cx="8" cy="8" r="7.500" fill="#e0692b" /><path d="M5 6h1M10 6h1M4 12c2-3 6-3 8 0" stroke="#444" strokeWidth="1.500" /></Svg>
          <Svg $s={8} viewBox="0 0 16 16"><circle cx="8" cy="8" r="7.500" fill="#eef5f8" /><path d="M6 6c0-3 5-3 4 0l-2 2v1M8 11v2" stroke="#477" strokeWidth="1.500" /></Svg>
          <Win s={5} d={MIN} />
          <Win s={5} d={RESTORE} />
          <Win s={5} d={CLOSE} />
        </WindowButtons>
      </TabRow>
    </Header>

    <Ribbon>
      <Group $w={50}>
        <GroupRow>
          <BigTool i="paste" t="Beillesztés" w={33} dim />
          <Stack $w={16}>
            <Mini aria-label="cut"><Icon n="cut" /></Mini>
            <Mini aria-label="copy"><Icon n="copy" /></Mini>
            <Mini aria-label="brush"><Icon n="brush" /><Caret /></Mini>
          </Stack>
        </GroupRow>
        <GroupName>Vágólap</GroupName>
      </Group>
      <Group $w={50}>
        <GroupRow>
          <BigTool i="pointer" t="Kiválasztás" w={32} caret />
          <MiniStack w={16} items={["filter", "chip", "frame"]} caret />
        </GroupRow>
        <GroupName>Kiválasztás</GroupName>
      </Group>
      <Group $w={19}>
        <GroupRow><MiniStack w={18} items={["plane", "plane2", "coords"]} /></GroupRow>
        <GroupName>Síkok</GroupName>
      </Group>
      <Group $w={134}>
        <GroupRow>
          <BigTool i="line" t="Vonal" w={28} caret />
          <BigTool i="circle" t="Kör" b="középpontjával" w={36} caret />
          <MiniStack w={24} items={["rect", "arc", "spline"]} caret line />
          <BigTool i="sketch" t="Vázlat" w={21} caret />
          <BigTool i="sketch3" t="3D" b="vázlat" w={24} />
        </GroupRow>
        <GroupName>Vázlat</GroupName>
      </Group>
      <Group $w={183}>
        <GroupRow>
          <BigTool i="extrude" t="Kihúzás" w={25} />
          <BigTool i="revolve" t="Forgáskihúzás" w={34} />
          <BigTool i="hole" t="Furat" w={25} caret />
          <BigTool i="round" t="Lekerekítés" w={27} caret />
          <BigTool i="draft" t="Ferdeség" w={27} />
          <BigTool i="shell" t="Vékonyfal" w={25} caret />
          <MiniStack w={18} items={["rib", "cube", "cubeO"]} caret />
        </GroupRow>
        <GroupName>Testek</GroupName>
      </Group>
      <Group $w={48}>
        <GroupRow>
          <BigTool i="pattern" t="Minta" w={21} caret />
          <BigTool i="mirror" t="Tükrözés" w={24} caret />
        </GroupRow>
        <GroupName>Minta</GroupName>
      </Group>
      <Group $w={144}>
        <GroupRow>
          <BigTool i="move" t="Felületek" b="mozgatása" w={36} caret />
          <BigTool i="del" t="Felületek" b="törlése" w={24} caret />
          <div>
            <Mini><Icon n="cubeT" s={8} />Furatok átméretezése</Mini>
            <Mini><Icon n="round" s={8} />Lekerekítések átméretezése</Mini>
          </div>
        </GroupRow>
        <GroupName>Módosítás</GroupName>
      </Group>
      <Group $w={96}>
        <GroupRow>
          <BigTool i="smart" t="Gyorsméretezés" w={42} />
          <MiniStack w={12} items={["dim", "loop", "dims"]} />
          <MiniStack w={16} items={["ang", "grid", "grid"]} />
          <MiniStack w={10} items={["dim"]} line />
          <MiniStack w={13} items={["style", "letter", "letterS"]} />
        </GroupRow>
        <GroupName>Méret</GroupName>
      </Group>
      <Group $w={83}>
        <GroupRow>
          <BigTool i="zoomArea" t="Terület" b="nagyítása" w={28} />
          <BigTool i="fit" t="Illesztés" w={21} />
          <MiniStack w={11} items={["zoom", "win", "win"]} />
          <MiniStack w={10} items={["spin", "layers", "win"]} />
          <MiniStack w={10} items={["lock", "pan"]} />
        </GroupRow>
        <GroupName>Orientáció</GroupName>
      </Group>
      <Group $w={53}>
        <StyleGrid>
          <StyleButton aria-label="wire"><Icon n="wire" s={12} /></StyleButton>
          <StyleButton aria-label="hidden"><Icon n="wire" s={12} /></StyleButton>
          <StyleButton aria-label="outline"><Icon n="wire2" s={12} /></StyleButton>
          <StyleButton aria-label="shaded"><Icon n="cubeO" s={12} /></StyleButton>
          <StyleButton aria-label="edges" $on><Icon n="cubeHalf" s={12} /></StyleButton>
        </StyleGrid>
      </Group>
      <Group $w={73}>
        <StyleList>
          <Mini as="label" htmlFor="styles"><Icon n="style" s={8} />Stílusok</Mini>
          <StyleField><select id="styles" /><Caret $c="#777" /></StyleField>
        </StyleList>
        <GroupName>Stílus</GroupName>
      </Group>
    </Ribbon>

    <Body>
      <Main>
        <Prompt>
          <PromptMark />
          <span>Kattintson a távolság megadásához, vagy gépelje be az értékét.  K=explicit pont kijelölés; majd M=felezőpont, E=végpont, C=középpont, S=sziluett pont.</span>
        </Prompt>
        <DocBar>
          <DocTab>
            <Icon n="docPart" s={7} />Alkatrész1
            <button aria-label="Bezárás"><Win s={5} d={CLOSE} /></button>
          </DocTab>
          <DocNav>
            <Win s={4} c="#999" d="M11 2L5 8l6 6z" />
            <Win s={4} c="#999" d="M5 2l6 6-6 6z" />
            <Caret $c="#111" $wide />
            <Win s={5} c="#111" d={CLOSE} />
          </DocNav>
        </DocBar>
        <Split>
          <TreePanel>
            <PanelTitle>
              <Svg $s={8} viewBox="0 0 16 16"><path d="M2 1h4v7h5v4H2z" fill="#eee" /><path d="M10 9h6v6h-6z" fill="#e0a070" /></Svg>
              <h2>EdgeTár</h2>
              <Svg $s={6} viewBox="0 0 16 16"><path d="M1 3h14" stroke="#fff" strokeWidth="2.500" /><path d="M1 7h14l-7 7z" fill="#fff" /></Svg>
              <Win s={5} d={CLOSE} />
            </PanelTitle>
            <Tree>
              {treeRows.map((r) => (
                <TreeRow key={r.t} $pad={r.pad} $dim={r.dim}>
                  {r.mark && <TreeMark $open={r.open} />}
                  {r.icons.map((n) => <Icon key={n} n={n} s={8} />)}
                  <span>{r.t}</span>
                </TreeRow>
              ))}
              <TreeRow $pad={10}>
                <TreeMark $open />
                <TreeBand>Hagyományos<Svg $s={6} viewBox="0 0 16 16"><path d="M1 4h10v9H1zM6 9l8-7" stroke="#fff3dc" strokeWidth="2" /></Svg></TreeBand>
              </TreeRow>
              {featureRows.map(([n, t], k) => (
                <TreeRow key={t} $pad={k ? 38 : 22}>
                  {!k && <TreeMark />}
                  {!k && <Svg $s={8} />}
                  <Icon n={n} s={8} />
                  <span>{t}</span>
                </TreeRow>
              ))}
            </Tree>
          </TreePanel>
          <Canvas>
            <Model />
            <Dialog>
              <DialogTitle>
                <h2>Horony</h2>
                <Win s={6} d={MIN} />
                <Win s={6} d="M8 1a7 7 0 1 1 0 14a7 7 0 0 1 0-14M7 5h3v3H8v4" />
                <Win s={6} d={CLOSE} />
              </DialogTitle>
              <DialogActions>
                <PushButton $w={35}>Beállítások</PushButton>
                <PushButton $w={11} aria-label="Továbbiak"><Caret $wide /></PushButton>
                <PushButton $w={38} $dim $end>Befejez</PushButton>
              </DialogActions>
              <StepHead><StepMark $open />Vázlat lépés</StepHead>
              <StepHead><StepMark />Profil rajzolás</StepHead>
              <StepHead $on><StepMark $open />Kiterjedés lépés</StepHead>
              <Options>
                {options.map(([t, n], k) => (
                  <OptionRow key={n}>
                    <span>{t}</span>
                    <OptionButton $on={k === 0}><Icon n={n} s={14} /></OptionButton>
                  </OptionRow>
                ))}
                <FieldRow>
                  <span>Távolság:</span>
                  <Combo $sel><input defaultValue="92.31 mm" /><Win s={5} c="#777" d="M1 5l7 6 7-6" /></Combo>
                </FieldRow>
                <FieldRow>
                  <span>Lépés:</span>
                  <Combo><input defaultValue="0.00 mm" /><Win s={5} c="#777" d="M1 5l7 6 7-6" /></Combo>
                </FieldRow>
              </Options>
            </Dialog>
          </Canvas>
        </Split>
      </Main>
      <Rail>
        <RailTab>
          <Icon n="library" s={9} />
          <span>Alakelem könyvtár</span>
        </RailTab>
        {["plus", "percent", "palette", "swatches", "rainbow", "link", "layers", "pin", "blue"].map((n) => (
          <Icon key={n} n={n} s={10} />
        ))}
      </Rail>
    </Body>

    <StatusBar>
      {["zoomArea", "zoom", "fit", "win", "win", "swatches", "cubeT", "cubeO"].map((n, k) =>
        [1, 6, 7].includes(k)
          ? <StatusPlain key={k} aria-label={n}><Icon n={n} s={8} /></StatusPlain>
          : <StatusChip key={k} aria-label={n}><Icon n={n} s={7} /></StatusChip>
      )}
      <RoundButton>−</RoundButton>
      <ZoomSlider type="range" aria-label="Nagyítás" defaultValue={38} />
      <RoundButton>+</RoundButton>
      <Svg $s={8} viewBox="0 0 16 16"><path d="M0 3h16v10H0z" fill="#e0151b" /><path d="M6 5l5 3-5 3z" fill="#fff" /></Svg>
      <RoundButton $red>●</RoundButton>
      <StatusChip aria-label="up">↑</StatusChip>
    </StatusBar>

    <TaskBar>
      <Weather>
        <Svg $s={14} viewBox="0 0 16 16"><path d="M3 12a3 3 0 0 1 1-6a4.500 4.500 0 0 1 8 1a2.600 2.600 0 0 1 1 5z" fill="#b9c8ee" stroke="#8b9fd6" /></Svg>
        <div>11°C<small>Felhős</small></div>
      </Weather>
      <Dock>
        <Svg $s={12} viewBox="0 0 16 16"><path d="M0 0h7.500v7.500H0zM8.500 0H16v7.500H8.500zM0 8.500h7.500V16H0zM8.500 8.500H16V16H8.500z" fill="#1b8be0" /></Svg>
        <DockSearch>
          <Svg $s={8} viewBox="0 0 16 16"><circle cx="7" cy="7" r="5.500" stroke="#222" strokeWidth="2" /><path d="M11 11l4 4" stroke="#222" strokeWidth="2" /></Svg>
          <input aria-label="Keresés" placeholder="Keresés" />
        </DockSearch>
        <DockApp aria-label="Feladatnézet"><Svg $s={11} viewBox="0 0 16 16"><path d="M5 1h11v11H5z" fill="#eee" /><path d="M1 4h4v7h7v4H1z" fill="#222" /></Svg></DockApp>
        <DockApp $run aria-label="Chrome"><Svg $s={13} viewBox="0 0 16 16"><path d="M8 8L1.500 4.200A7.500 7.500 0 0 1 14.500 4.200z" fill="#e33b2e" /><path d="M8 8l6.500-3.800A7.500 7.500 0 0 1 8 15.500z" fill="#f7c928" /><path d="M8 8v7.500A7.500 7.500 0 0 1 1.500 4.200z" fill="#2c9c4a" /><circle cx="8" cy="8" r="3.500" fill="#3b7ded" stroke="#fff" strokeWidth="1.200" /></Svg></DockApp>
        <DockApp aria-label="Fájlkezelő"><Svg $s={13} viewBox="0 0 16 16"><path d="M1 2h6l1 2h7v9H1z" fill="#f5b921" /><path d="M1 7h14v7H1z" fill="#fbd65a" /><path d="M4 11h8v3H4z" fill="#2a7bd0" /></Svg></DockApp>
        <DockApp aria-label="Edge"><Svg $s={13} viewBox="0 0 16 16"><circle cx="8" cy="8" r="7.500" fill="#1a79c9" /><path d="M1 8C1-1 15-2 15.500 7c0 3-5 4-6 2 1-4-5-5-8.500-1z" fill="#43c1a4" /><path d="M1 10h6v5H1z" fill="#a4521f" /></Svg></DockApp>
        <DockApp aria-label="Store"><Svg $s={13} viewBox="0 0 16 16"><path d="M1 4h14v11H1z" fill="#174f7d" /><path d="M5 4V1h6v3" stroke="#2a90cf" strokeWidth="1.500" /><path d="M5 6h3v3H5z" fill="#e45a2b" /><path d="M8.500 6h3v3h-3z" fill="#6fb53c" /><path d="M5 9.500h3v3H5z" fill="#38a3e0" /><path d="M8.500 9.500h3v3h-3z" fill="#f4c12c" /></Svg></DockApp>
        <DockApp $run aria-label="Jegyzetek"><Svg $s={13} viewBox="0 0 16 16"><path d="M2 2h13v13H2z" fill="#333" /><path d="M9 8h6l-4 6H9z" fill="#f7d532" /></Svg></DockApp>
        <DockApp $on aria-label="Solid Edge"><Svg $s={13} viewBox="0 0 16 16"><path d="M1 1h14v14H1z" fill="#1f4294" /><text x="3" y="11" fontSize="8" fontWeight="bold" fill="#fff" fontFamily={ui}>SE</text></Svg></DockApp>
        <DockApp $run aria-label="Felvétel"><Svg $s={12} viewBox="0 0 16 16"><rect x="1" y="2" width="10" height="12" rx="4" fill="#ef4358" /><path d="M10 8l5-5v10z" fill="#ef4358" /><circle cx="6" cy="8" r="2" fill="#fbd0d5" /></Svg></DockApp>
      </Dock>
      <Tray>
        <Win s={6} c="#333" d="M2 11l6-6 6 6" />
        <Svg $s={9} viewBox="0 0 16 16"><path d="M2 11a3 3 0 0 1 2-5a5 5 0 0 1 9 2a3 3 0 0 1 0 4z" fill="#2069c0" /><circle cx="12" cy="11" r="4" fill="#d7373c" /></Svg>
        <Svg $s={9} viewBox="0 0 16 16"><rect x="5.500" y="1" width="5" height="9" rx="2.500" fill="#5c8fd0" /><path d="M3 7c0 7 10 7 10 0M8 12v4" stroke="#445" strokeWidth="1.200" /></Svg>
        <Inline>
          <Svg $s={10} viewBox="0 0 16 16"><path d="M9 3H1v9h13V8M5 15h6M11 1h4v5h-4z" stroke="#333" strokeWidth="1.300" /></Svg>
          <Svg $s={10} viewBox="0 0 16 16"><path d="M1 6h3l4-4v12l-4-4H1zM10 5c2 2 2 4 0 6M12 3c4 3 4 7 0 10" stroke="#333" strokeWidth="1.200" /></Svg>
        </Inline>
        <span>9:22<br />2025. 10. 09.</span>
      </Tray>
    </TaskBar>
  </Page>
);

export default App;
